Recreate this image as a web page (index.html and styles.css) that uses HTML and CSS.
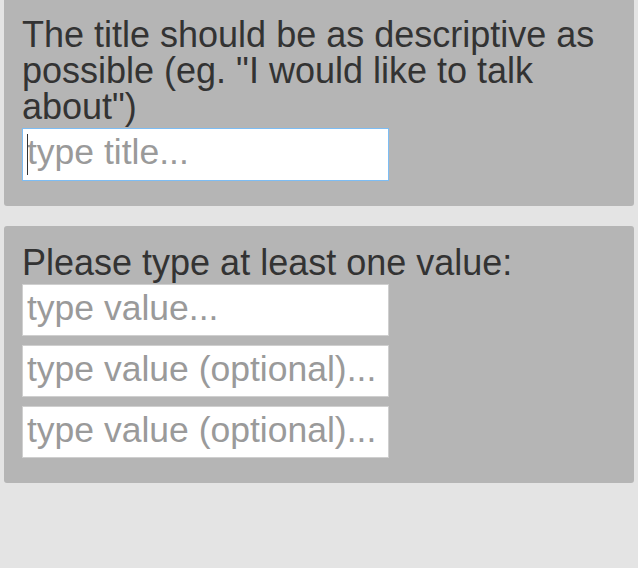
FILE: index.html
```html
<!DOCTYPE html>
<html lang="en">
<head>
<meta charset="utf-8">
<title>Topic form</title>
<link rel="stylesheet" href="styles.css">
</head>
<body>
  <section class="panel panel-first">
    <label class="label" for="title">The title should be as descriptive as possible (eg. "I would like to talk about")</label>
    <div class="field">
      <input id="title" class="input input-focused" type="text" placeholder="type title...">
      <span class="caret"></span>
    </div>
  </section>
  <section class="panel">
    <label class="label" for="v1">Please type at least one value:</label>
    <div class="values">
      <input id="v1" class="input" type="text" placeholder="type value...">
      <input class="input" type="text" placeholder="type value (optional)...">
      <input class="input" type="text" placeholder="type value (optional)...">
    </div>
  </section>
</body>
</html>
```
FILE: styles.css
```css
html, body {
  margin: 0;
  padding: 0;
}
body {
  background: #e4e4e4;
  font-family: "Liberation Sans", Arial, sans-serif;
  color: #333;
}
.panel {
  background: #b5b5b5;
  border-radius: 3px;
  margin: 0 4px 20px;
  padding: 19px 18px 25px;
}
.panel-first {
  margin-top: -2px;
}
.label {
  display: block;
  font-size: 36px;
  line-height: 36px;
  margin-bottom: 3px;
}
.values {
  display: flex;
  flex-direction: column;
  gap: 9px;
}
.field {
  position: relative;
  width: 367px;
}
.input {
  display: block;
  box-sizing: border-box;
  width: 367px;
  height: 52px;
  margin: 0;
  padding: 0 4px 4px;
  border: 1px solid #cfcfcf;
  border-radius: 0;
  background: #fff;
  font-family: "Liberation Sans", Arial, sans-serif;
  font-size: 35.5px;
  color: #333;
  outline: none;
}
.input::placeholder {
  color: #9a9a9a;
  opacity: 1;
}
.input-focused {
  border-color: #7dbdf4;
  height: 53px;
}
.caret {
  position: absolute;
  left: 5px;
  top: 6px;
  width: 1px;
  height: 41px;
  background: #333;
}
```
